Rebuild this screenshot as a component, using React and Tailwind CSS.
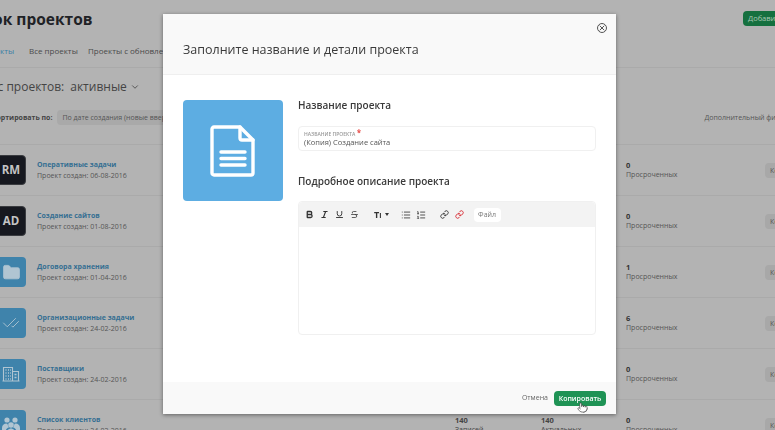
import { ChevronDown, CheckCheck, Folder, Bold, Italic, Underline, Strikethrough, List, ListOrdered, Link, Pointer, X } from 'lucide-react'

const font = { fontFamily: '"Open Sans", sans-serif' }

const rows = [
  { title: 'Оперативные задачи', date: '06-08-2016', late: 0, text: 'RM' },
  { title: 'Создание сайтов', date: '01-08-2016', late: 0, text: 'AD' },
  { title: 'Договора хранения', date: '01-04-2016', late: 1, icon: 'folder' },
  { title: 'Организационные задачи', date: '24-02-2016', late: 6, icon: 'check' },
  { title: 'Поставщики', date: '24-02-2016', late: 0, icon: 'building' },
  { title: 'Список клиентов', date: '24-02-2016', late: 0, icon: 'users', total: 140 },
]

function BuildingIcon() {
  return (
    <svg width="18" height="18" viewBox="0 0 18 18" fill="none" stroke="#b0c5d2" strokeWidth="1.1">
      <path d="M1.500 16V2.500h9V16M10.500 6.500h6V16M.5 16h17" />
      <path d="M3.500 5h1M6 5h1M8.200 5h.8M3.500 8h1M6 8h1M8.200 8h.8M3.500 11h1M6 11h1M8.200 11h.8M3.500 14h1M6 14h1M8.200 14h.8M12.500 9.500h2M12.500 12.500h2" strokeWidth="1.5" />
    </svg>
  )
}

function UsersIcon() {
  return (
    <svg width="20" height="20" viewBox="0 0 20 20" fill="#b0c5d2">
      <circle cx="6" cy="5" r="2.6" />
      <circle cx="14" cy="5" r="2.6" />
      <circle cx="10" cy="10" r="2.8" />
      <path d="M1 13c0-3 2-4.500 4.500-4.500l1 .5c.5 2 1 3 1.500 3.500-2 .5-3 1.500-3.200 3.500H2c-.6 0-1-.5-1-1.500zM19 13c0-3-2-4.500-4.500-4.500l-1 .5c-.5 2-1 3-1.500 3.500 2 .5 3 1.500 3.200 3.500H18c.6 0 1-.5 1-1.500zM5.500 19c0-3 2-5.500 4.500-5.500s4.500 2.500 4.500 5.500z" />
    </svg>
  )
}

function RowIcon({ row }) {
  if (row.text) {
    return (
      <div className="w-[30px] h-[30px] shrink-0 ml-[-4px] rounded-sm bg-[#16181f] border border-[#3a3c40] flex items-center justify-center text-[#c4c4c4] text-[11.5px] font-bold">
        {row.text}
      </div>
    )
  }
  return (
    <div className="w-[30px] h-[30px] shrink-0 ml-[-4px] rounded-sm bg-[#3f83ab] flex items-center justify-center text-[#b0c5d2]">
      {row.icon === 'folder' && <Folder size={19} fill="#b0c5d2" strokeWidth={1} />}
      {row.icon === 'check' && <CheckCheck size={18} strokeWidth={1.2} />}
      {row.icon === 'building' && <BuildingIcon />}
      {row.icon === 'users' && <UsersIcon />}
    </div>
  )
}

function ProjectRow({ row }) {
  return (
    <div className="h-[51px] shrink-0 flex items-center border-t border-[#aaaaaa] relative">
      <RowIcon row={row} />
      <div className="ml-[11px] w-[418px] shrink-0">
        <div className="text-[7px] font-bold text-[#366f92] leading-[11px]">{row.title}</div>
        <div className="text-[7px] text-[#555] leading-[11px]">Проект создан: {row.date}</div>
      </div>
      {row.total ? (
        <>
          <div className="w-[86px] shrink-0 text-[7px] leading-[10px] text-[#444]">
            <div className="font-bold text-[7.5px]">{row.total}</div>
            <div>Записей</div>
          </div>
          <div className="w-[85px] shrink-0 text-[7px] leading-[10px] text-[#444]">
            <div className="font-bold text-[7.5px]">{row.total}</div>
            <div>Актуальных</div>
          </div>
        </>
      ) : (
        <div className="w-[171px] shrink-0" />
      )}
      <div className="w-[139px] shrink-0 text-[7px] leading-[10px] text-[#555]">
        <div className="font-bold text-[7.5px] text-[#333]">{row.late}</div>
        <div>Просроченных</div>
      </div>
      <div className="w-[40px] h-[15px] shrink-0 rounded-sm bg-[#a8a8a8] text-[7px] text-[#555] leading-[15px] pl-[5px]">Копировать</div>
    </div>
  )
}

function BackPage() {
  return (
    <div className="w-[775px] h-[430px] overflow-hidden bg-[#b3b3b3] text-[#333]">
      <div className="ml-[-40px] w-[900px]">
        <div className="h-[68px] border-b border-[#aaaaaa] relative">
          <div className="ml-[-6px] pt-[9px] text-[15.5px] font-bold leading-[21px] text-[#1f2226]">Список проектов</div>
          <div className="flex mt-[15px] ml-[20px] text-[8px] leading-[12px] text-[#4a4a4a]">
            <span className="w-[49px] text-[#3b7ea6]">Проекты</span>
            <span className="w-[59px]">Все проекты</span>
            <span>Проекты с обновлениями</span>
          </div>
          <div className="absolute left-[783px] top-[11px] w-[80px] h-[15px] rounded-sm bg-[#15703f] text-[#a9c8b5] text-[7.5px] leading-[15px] pl-[5px]">Добавить проект</div>
        </div>
        <div className="ml-[6px] pt-[10px] flex items-center text-[12px] leading-[18px] text-[#444]">
          <span>Статус проектов:</span>
          <span className="ml-[6px]">активные</span>
          <ChevronDown size={10} className="ml-[3px]" />
        </div>
        <div className="h-[48px] flex items-start pt-[14px] pl-[32px]">
          <span className="text-[7px] font-bold leading-[15px] text-[#444] whitespace-nowrap">Сортировать по:</span>
          <span className="ml-[5px] w-[130px] h-[15px] shrink-0 rounded-sm bg-[#a9a9a9] text-[7px] leading-[15px] pl-[5px] text-[#555] whitespace-nowrap overflow-hidden">По дате создания (новые вверху)</span>
          <span className="ml-[517px] text-[7px] leading-[15px] text-[#555] whitespace-nowrap">Дополнительный фильтр</span>
        </div>
        <div className="pl-[40px] flex flex-col">
          {rows.map(row => (
            <ProjectRow key={row.title} row={row} />
          ))}
        </div>
      </div>
    </div>
  )
}

function Toolbar() {
  return (
    <div className="h-[25px] bg-[#f3f3f3] rounded-t-sm flex items-center pl-[6px] text-[#333]">
      <Bold size={9} strokeWidth={3.5} />
      <Italic size={9} strokeWidth={3} className="ml-[6px]" />
      <Underline size={9} strokeWidth={2.5} className="ml-[6px]" />
      <Strikethrough size={9} strokeWidth={2} className="ml-[6px]" />
      <span className="ml-[15px] text-[9px] font-bold leading-none">T<span className="text-[7px]">I</span></span>
      <span className="ml-[3px] w-0 h-0 border-l-[2px] border-r-[2px] border-t-[3px] border-l-transparent border-r-transparent border-t-[#333]" />
      <List size={10} strokeWidth={2} className="ml-[12px]" />
      <ListOrdered size={10} strokeWidth={2} className="ml-[5px]" />
      <Link size={9} strokeWidth={2.4} className="ml-[14px]" />
      <Link size={9} strokeWidth={2.6} className="ml-[6px] text-[#d9363e]" />
      <span className="ml-[10px] h-[14px] w-[27px] bg-white rounded-sm text-center text-[7px] leading-[14px] text-[#777]">Файл</span>
    </div>
  )
}

function FileIcon() {
  return (
    <svg width="46" height="52" viewBox="0 0 46 52" fill="none" stroke="white" strokeWidth="3.4" strokeLinejoin="round" strokeLinecap="round">
      <path d="M4 2h26l13 13v33a2 2 0 0 1-2 2H4a2 2 0 0 1-2-2V4a2 2 0 0 1 2-2z" />
      <path d="M30 2v11a2 2 0 0 0 2 2h11" />
      <path d="M11 27h24M11 33.500h24M11 40h24" />
    </svg>
  )
}

function Modal() {
  return (
    <div className="absolute left-[163px] top-[14px] w-[453px] h-[400px] bg-white shadow-[0_1px_4px_rgba(0,0,0,0.45)] flex flex-col will-change-transform">
      <div className="h-[61px] shrink-0 bg-[#f9f9f9] border-b border-[#efefef] flex items-center pl-[20px] pt-[12px] relative">
        <h2 className="text-[12.5px] font-medium leading-[18px] text-[#3a3a3a]">Заполните название и детали проекта</h2>
        <div className="absolute right-[9px] top-[9px] w-[10px] h-[10px] rounded-full border border-[#555] flex items-center justify-center text-[#555]">
          <X size={8} strokeWidth={3} />
        </div>
      </div>
      <div className="flex-1 flex pl-[20px] pt-[25px]">
        <div className="w-[100px] h-[101px] shrink-0 rounded-sm bg-[#5dade2] flex items-center justify-center">
          <FileIcon />
        </div>
        <div className="ml-[15px] w-[298px]">
          <div className="text-[10px] font-semibold leading-[15px] text-[#3a3a3a] mt-[-2px]">Название проекта</div>
          <div className="mt-[13px] h-[25px] rounded-sm border border-[#f0f0f0] pl-[5px] pt-[3px]">
            <div className="text-[5px] font-semibold leading-[6px] text-[#999] uppercase">
              Название проекта <span className="text-[#e53935] text-[8px] leading-[5px]">*</span>
            </div>
            <div className="text-[7.5px] leading-[11px] text-[#555]">(Копия) Создание сайта</div>
          </div>
          <div className="mt-[23px] text-[10px] font-semibold leading-[15px] text-[#3a3a3a]">Подробное описание проекта</div>
          <div className="mt-[12px] h-[134px] rounded-sm border border-[#f0f0f0]">
            <Toolbar />
          </div>
        </div>
      </div>
      <div className="h-[32px] shrink-0 bg-[#f9f9f9] flex items-center justify-end pr-[10px] relative">
        <span className="text-[7px] text-[#666]">Отмена</span>
        <span className="ml-[6px] w-[52px] h-[15px] rounded-sm bg-[#1f9355] text-white text-[7px] font-semibold leading-[15px] text-center">Копировать</span>
        <Pointer size={11} fill="white" strokeWidth={1.4} className="absolute right-[28px] top-[20px] text-[#333]" />
      </div>
    </div>
  )
}

export default function App() {
  return (
    <div className="relative w-[775px] h-[430px] overflow-hidden" style={font}>
      <BackPage />
      <Modal />
    </div>
  )
}
